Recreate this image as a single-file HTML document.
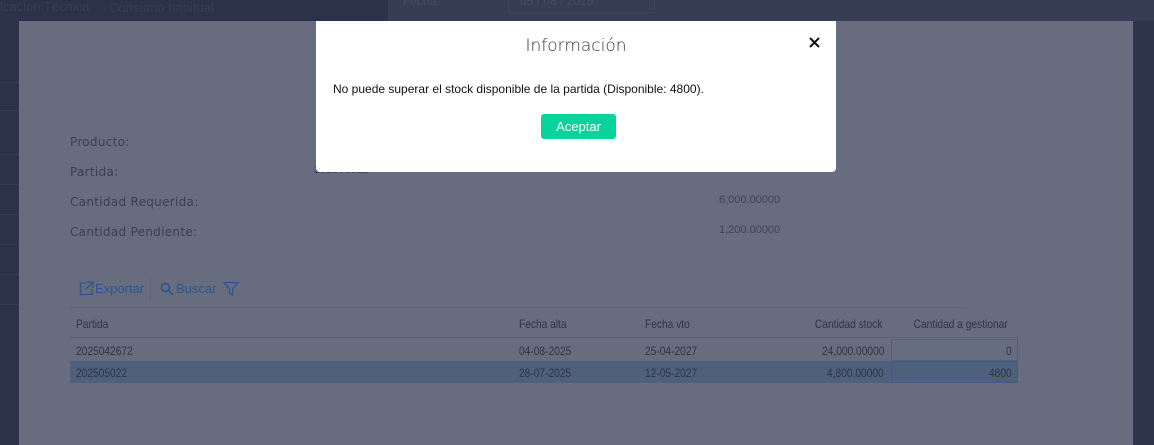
<!DOCTYPE html>
<html><head><meta charset="utf-8"><style>
*{margin:0;padding:0;box-sizing:border-box}
body{width:1154px;height:445px;overflow:hidden;background:#2b3249;position:relative;font-family:"Liberation Sans",sans-serif}
.a{position:absolute;white-space:nowrap}
.lbl{color:#3a4054;letter-spacing:.3px;font-family:"DejaVu Sans","Liberation Sans",sans-serif;font-size:12px}
.t{font-size:12px;color:#2e3446;transform:scaleX(.85);transform-origin:left top}
.r{transform-origin:right top}
</style></head><body>
<div class="a" style="left:388px;top:0;width:766px;height:21px;background:#363d55"></div>
<div class="a" style="left:508px;top:0;width:147px;height:13px;border:1px solid #404760;border-top:none;border-radius:0 0 3px 3px"></div>
<div class="a" style="left:403px;top:-6px;font-size:12px;color:#454b63">Fecha</div>
<div class="a" style="left:520px;top:-6px;font-size:12px;color:#454b63">05 / 08 / 2025</div>
<div class="a" style="left:0;top:-1px;font-size:13px;color:#363d58">icación Técnica</div>
<div class="a" style="left:109px;top:0;font-size:13px;color:#363d58">Consumo habitual</div>
<div class="a" style="left:1133px;top:21px;width:21px;height:424px;background:#2e354d"></div>
<div class="a" style="left:0;top:82px;width:19px;height:1px;background:#343b52"></div>
<div class="a" style="left:0;top:110px;width:19px;height:1px;background:#343b52"></div>
<div class="a" style="left:0;top:154px;width:19px;height:1px;background:#343b52"></div>
<div class="a" style="left:0;top:184px;width:19px;height:1px;background:#343b52"></div>
<div class="a" style="left:0;top:214px;width:19px;height:1px;background:#343b52"></div>
<div class="a" style="left:0;top:244px;width:19px;height:1px;background:#343b52"></div>
<div class="a" style="left:0;top:274px;width:19px;height:1px;background:#343b52"></div>
<div class="a" style="left:0;top:304px;width:19px;height:1px;background:#343b52"></div>
<div class="a" style="left:19px;top:21px;width:1114px;height:424px;background:#676d7e"></div>

<div class="a lbl" style="left:70px;top:135px">Producto:</div>
<div class="a lbl" style="left:70px;top:165px">Partida:</div>
<div class="a lbl" style="left:70px;top:195px">Cantidad Requerida:</div>
<div class="a lbl" style="left:70px;top:225px">Cantidad Pendiente:</div>
<div class="a" style="left:314px;top:164px;font-size:11px;color:#3a4054">202505022</div>
<div class="a" style="left:719px;top:194px;font-size:11px;color:#3f4558">6,000.00000</div>
<div class="a" style="left:719px;top:224px;font-size:11px;color:#3f4558">1,200.00000</div>

<svg class="a" style="left:79px;top:281px" width="15" height="15" viewBox="0 0 15 15" fill="none" stroke="#2d5590" stroke-width="1.3"><path d="M7 2H1.5v11.5H13V8"/><path d="M8 1h6v6M14 1L6.5 8.5"/></svg>
<div class="a" style="left:95px;top:281px;font-size:13px;color:#2d5590">Exportar</div>
<div class="a" style="left:150px;top:278px;width:1px;height:24px;background:#5f6577"></div>
<svg class="a" style="left:160px;top:282px" width="14" height="14" viewBox="0 0 14 14" fill="none" stroke="#2d5590" stroke-width="1.8"><circle cx="5.5" cy="5.5" r="4"/><path d="M8.5 8.5L13 13"/></svg>
<div class="a" style="left:176px;top:281px;font-size:13px;color:#2d5590">Buscar</div>
<svg class="a" style="left:223px;top:281px" width="16" height="16" viewBox="0 0 16 16" fill="none" stroke="#2d5590" stroke-width="1.2"><path d="M1 1.5h14L9.5 8v6.5L6.5 12V8z"/></svg>

<div class="a" style="left:70px;top:307px;width:897px;height:1px;background:#5c6274"></div>
<div class="a t" style="left:76px;top:317px">Partida</div>
<div class="a t" style="left:519px;top:317px">Fecha alta</div>
<div class="a t" style="left:645px;top:317px">Fecha vto</div>
<div class="a t r" style="right:272px;top:317px">Cantidad stock</div>
<div class="a t r" style="right:146px;top:317px">Cantidad a gestionar</div>
<div class="a" style="left:70px;top:337px;width:948px;height:1px;background:#5c6274"></div>
<div class="a" style="left:70px;top:361px;width:948px;height:22px;background:#4e607c"></div>
<div class="a" style="left:891px;top:339px;width:127px;height:22px;border:1px solid #4f6280"></div>
<div class="a" style="left:891px;top:361px;width:127px;height:22px;border:1px solid #3f5b8c"></div>
<div class="a t" style="left:76px;top:344px">2025042672</div>
<div class="a t" style="left:519px;top:344px">04-08-2025</div>
<div class="a t" style="left:645px;top:344px">25-04-2027</div>
<div class="a t r" style="right:270px;top:344px">24,000.00000</div>
<div class="a t r" style="right:142px;top:344px">0</div>
<div class="a t" style="left:76px;top:366px">202505022</div>
<div class="a t" style="left:519px;top:366px">28-07-2025</div>
<div class="a t" style="left:645px;top:366px">12-05-2027</div>
<div class="a t r" style="right:270px;top:366px">4,800.00000</div>
<div class="a t r" style="right:142px;top:366px">4800</div>

<div class="a" style="left:316px;top:21px;width:520px;height:151px;background:#fff;border-radius:0 0 4px 4px"></div>
<div class="a" style="left:316px;top:36px;width:520px;text-align:center;font-size:17px;color:#333;font-family:'DejaVu Sans','Liberation Sans',sans-serif;font-weight:300">Información</div>
<svg class="a" style="left:809px;top:37px" width="11" height="11" viewBox="0 0 11 11" stroke="#111" stroke-width="2"><path d="M1 1L10 10M10 1L1 10"/></svg>
<div class="a" style="left:333px;top:82px;font-size:12px;color:#111">No puede superar el stock disponible de la partida (Disponible: 4800).</div>
<div class="a" style="left:541px;top:114px;width:75px;height:25px;background:#07d49a;border-radius:3px;color:#fff;font-size:13px;text-align:center;line-height:25px">Aceptar</div>
</body></html>
